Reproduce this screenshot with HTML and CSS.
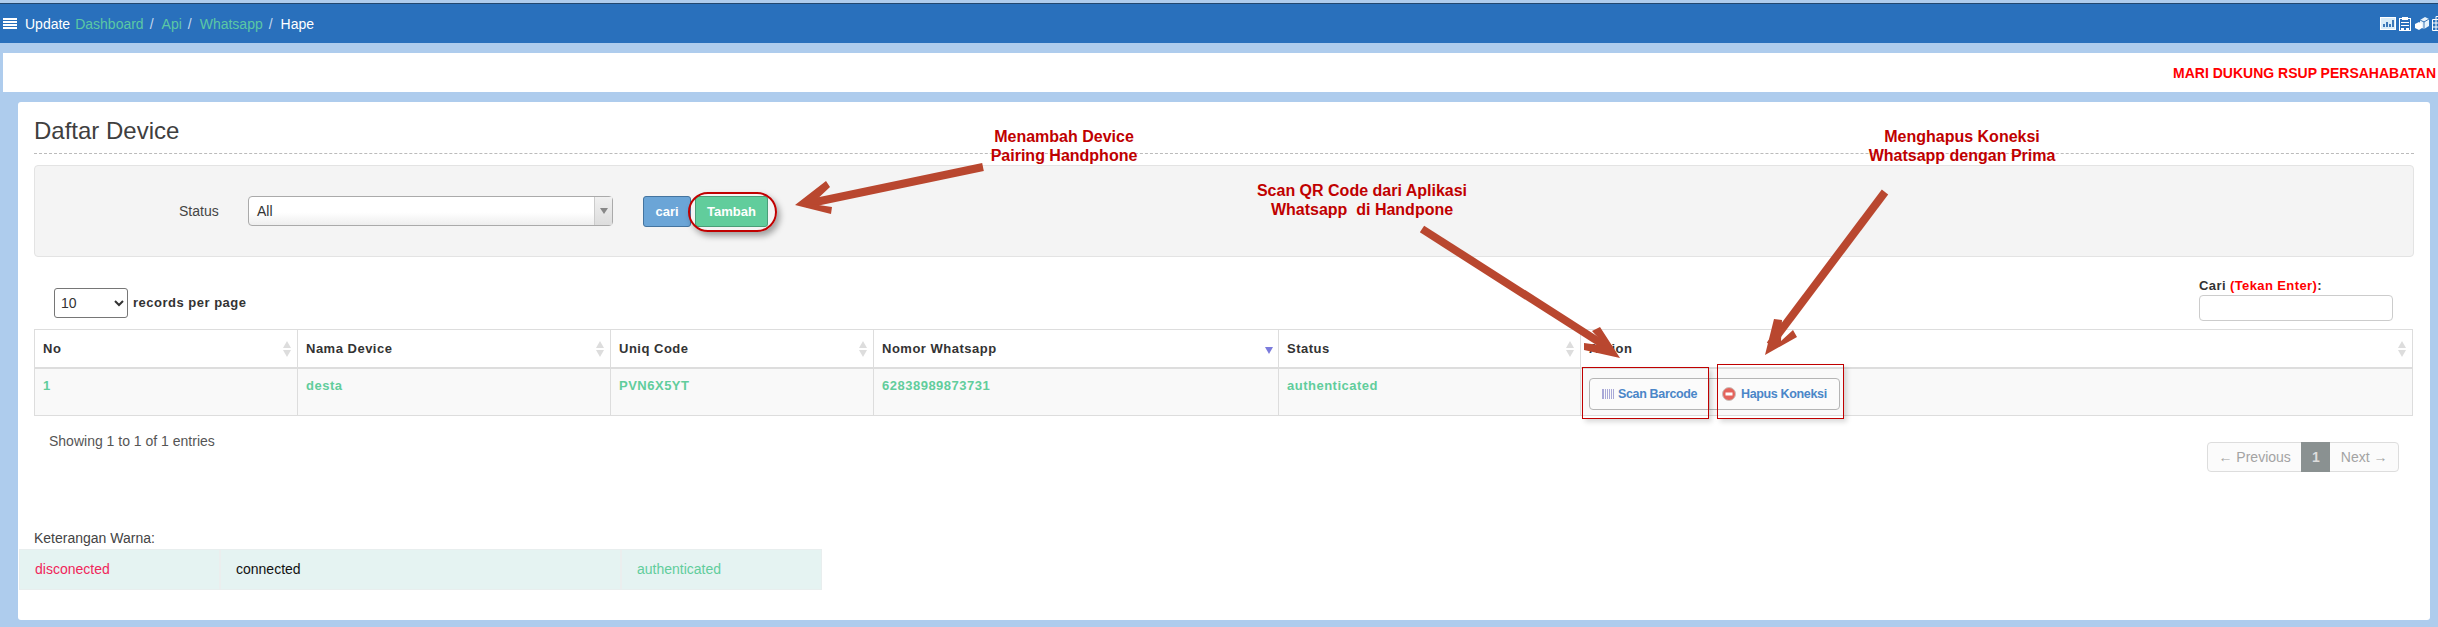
FILE: index.html
```html
<!DOCTYPE html>
<html lang="en">

<head>
    <meta charset="UTF-8">
    <meta name="viewport" content="width=device-width, initial-scale=1.0">
    <title>Daftar Device</title>
    <link rel="stylesheet" href="styles.css">
</head>

<body>
    <header class="topbar">
        <div class="crumbs">
            <span class="burger"><i></i><i></i><i></i><i></i></span>
            <span class="crumb-update">Update</span>
            <a href="#" class="crumb-link">Dashboard</a><span class="crumb-sep">/</span>
            <a href="#" class="crumb-link crumb-api">Api</a><span class="crumb-sep">/</span>
            <a href="#" class="crumb-link crumb-wa">Whatsapp</a><span class="crumb-sep">/</span>
            <span class="crumb-current">Hape</span>
        </div>
        <div class="tools">
            <svg width="16" height="13" viewBox="0 0 16 13">
                <rect x="0.5" y="0.5" width="15" height="12" fill="#d9ecf8" stroke="#fff" />
                <path d="M3 10V7h2v3zM6 10V5h2v5zM9 10V7h2v3zM12 10V3h2v7z" fill="#3c78b8" />
            </svg>
            <svg width="12" height="14" viewBox="0 0 12 14">
                <rect x="0.5" y="1.5" width="11" height="12" fill="#2970bc" stroke="#fff" />
                <rect x="3" y="0" width="6" height="3" fill="#fff" />
                <path d="M2 5h8v1H2zM2 8h8v1H2zM2 11h3v2H2zM7 11h3v2H7z" fill="#fff" />
            </svg>
            <svg width="15" height="13" viewBox="0 0 15 13">
                <path d="M6 3l5-3 4 2v7l-5 3-4-2z" fill="#e6f2fb" />
                <path d="M1 7l4-2 3 2v4l-3 2-4-2z" fill="#fff" />
                <path d="M10 4v8M6 3l4 2 5-3" stroke="#3c78b8" fill="none" />
            </svg>
            <svg width="12" height="15" viewBox="0 0 12 15">
                <path d="M0.5 3.5h11v11H0.5zM4 3.5v11M8 3.5v11M0.5 7h11M0.5 11h11M4 3.5V0.5h4v3" fill="none" stroke="#fff" />
            </svg>
        </div>
    </header>

    <div class="notice">
        <span>MARI DUKUNG RSUP PERSAHABATAN</span>
    </div>

    <main class="panel">
        <h1 class="page-title">Daftar Device</h1>

        <div class="filter-well">
            <label class="filter-label">Status</label>
            <div class="fake-select">
                <span class="fake-select-text">All</span>
                <span class="fake-select-arrow"></span>
            </div>
            <div class="filter-buttons">
                <button class="btn btn-cari" type="button">cari</button>
                <button class="btn btn-tambah" type="button">Tambah</button>
            </div>
        </div>

        <div class="table-top">
            <div class="page-size">
                <select class="page-size-select">
                    <option>10</option>
                </select>
                <span>records per page</span>
            </div>
            <div class="search-box">
                <label for="cari">Cari <span class="search-hint">(Tekan Enter)</span>:</label>
                <input type="text" id="cari">
            </div>
        </div>

        <table class="device-table">
            <thead>
                <tr>
                    <th class="col-no">No<span class="sort"></span></th>
                    <th class="col-name">Nama Device<span class="sort"></span></th>
                    <th class="col-code">Uniq Code<span class="sort"></span></th>
                    <th class="col-wa">Nomor Whatsapp<span class="sort-active"></span></th>
                    <th class="col-status">Status<span class="sort"></span></th>
                    <th>Action<span class="sort"></span></th>
                </tr>
            </thead>
            <tbody>
                <tr>
                    <td>1</td>
                    <td>desta</td>
                    <td>PVN6X5YT</td>
                    <td>62838989873731</td>
                    <td>authenticated</td>
                    <td class="action-cell">
                        <div class="btn-group">
                            <a href="#" class="act act-scan">
                                <svg width="12" height="10" viewBox="0 0 12 10">
                                    <path d="M0 0h2v10H0zM3 0h1v10H3zM5 0h1v10H5zM7 0h1v10H7zM9 0h1v10H9zM11 0h1v10h-1z" fill="#a9a9d8" />
                                </svg>
                                Scan Barcode
                            </a>
                            <a href="#" class="act act-hapus">
                                <svg width="14" height="14" viewBox="0 0 14 14">
                                    <circle cx="7" cy="7" r="6.5" fill="#e4645c" stroke="#c9c0bc" />
                                    <rect x="3.5" y="5.5" width="7" height="3" fill="#fff" />
                                </svg>
                                Hapus Koneksi
                            </a>
                        </div>
                    </td>
                </tr>
            </tbody>
        </table>

        <div class="table-bottom">
            <div class="entries">Showing 1 to 1 of 1 entries</div>
            <div class="pager">
                <span class="pager-item">&larr; Previous</span>
                <span class="pager-item pager-active">1</span>
                <span class="pager-item">Next &rarr;</span>
            </div>
        </div>

        <div class="legend-title">Keterangan Warna:</div>
        <div class="legend">
            <div class="legend-cell legend-red">disconected</div>
            <div class="legend-cell legend-black">connected</div>
            <div class="legend-cell legend-green">authenticated</div>
        </div>
    </main>

    <!-- annotations drawn on top of the screenshot -->
    <div class="note note-add">Menambah Device<br>Pairing Handphone</div>
    <div class="note note-scan">Scan QR Code dari Aplikasi<br>Whatsapp&nbsp; di Handpone</div>
    <div class="note note-remove">Menghapus Koneksi<br>Whatsapp dengan Prima</div>

    <div class="mark-oval"></div>
    <div class="mark-box mark-box-scan"></div>
    <div class="mark-box mark-box-hapus"></div>

    <svg class="arrows" width="2438" height="627" viewBox="0 0 2438 627">
        <g fill="none" stroke="#b9472f" stroke-width="8">
            <path d="M983 167L806 204" />
            <path d="M1422 229L1610 349" />
            <path d="M1885 192L1770 345" />
        </g>
        <g fill="#b9472f">
            <path d="M795 205L826 181L830 187L812 204L832 207L831 214z" />
            <path d="M1620 358L1600 327L1592 331L1606 346L1584 343L1584 350z" />
            <path d="M1765 355L1774 319L1782 320L1781 341L1793 330L1797 337z" />
        </g>
    </svg>
</body>

</html>
```

FILE: styles.css
```css
* {
    box-sizing: border-box;
}

html,
body {
    height: 100%;
}

body {
    font-family: "Liberation Sans", Arial, sans-serif;
    font-size: 14px;
    color: #333333;
    margin: 0;
    padding-top: 3px;
    background-color: #aecced;
    overflow: hidden;
    position: relative;
}

a {
    text-decoration: none;
}

.topbar {
    height: 40px;
    background-color: #2970bc;
    border-top: 1px solid #22476f;
    display: flex;
    justify-content: space-between;
    align-items: center;
    overflow: hidden;
}

.crumbs {
    display: flex;
    align-items: center;
    padding-left: 3px;
    color: #ffffff;
}

.burger {
    display: flex;
    flex-direction: column;
    gap: 1px;
    width: 14px;
    margin-right: 8px;
}

.burger i {
    display: block;
    height: 2px;
    background-color: #ffffff;
}

.crumb-update {
    margin-right: 5px;
}

.crumb-link {
    color: #5bc8a4;
}

.crumb-sep {
    color: #c5d8ee;
    margin-left: 6px;
    margin-right: 8px;
}

.crumb-current {
    color: #ffffff;
}

.tools {
    display: flex;
    align-items: center;
    gap: 3px;
    width: 58px;
    flex-shrink: 0;
    flex-wrap: nowrap;
}

.tools svg {
    flex-shrink: 0;
}

.notice {
    height: 39px;
    margin: 10px 0 10px 3px;
    background-color: #ffffff;
    color: #ff0000;
    font-weight: bold;
    font-size: 14px;
    display: flex;
    align-items: center;
    justify-content: flex-end;
    padding-right: 2px;
    white-space: nowrap;
}

.panel {
    height: 518px;
    margin: 0 8px 0 18px;
    padding: 0 16px;
    background-color: #ffffff;
    border-radius: 3px;
}

.page-title {
    height: 52px;
    margin: 0;
    padding-top: 15px;
    font-size: 24px;
    line-height: 28px;
    font-weight: normal;
    color: #3f3f3f;
    border-bottom: 1px dashed #bbbbbb;
}

.filter-well {
    height: 92px;
    margin-top: 11px;
    background-color: #f4f4f4;
    border: 1px solid #e3e3e3;
    border-radius: 4px;
    display: flex;
    align-items: flex-start;
    padding-top: 30px;
}

.filter-label {
    padding-left: 144px;
    box-sizing: content-box;
    width: 40px;
    line-height: 30px;
    color: #444444;
}

.fake-select {
    width: 365px;
    height: 30px;
    margin-left: 29px;
    border: 1px solid #aaaaaa;
    border-radius: 4px;
    background: linear-gradient(#ffffff 55%, #eeeeee);
    display: flex;
    justify-content: space-between;
    align-items: center;
}

.fake-select-text {
    padding-left: 8px;
}

.fake-select-arrow {
    width: 18px;
    height: 28px;
    border-left: 1px solid #cccccc;
    background: linear-gradient(#f0f0f0, #dddddd);
    position: relative;
}

.fake-select-arrow::after {
    content: "";
    position: absolute;
    left: 5px;
    top: 11px;
    border-left: 4px solid transparent;
    border-right: 4px solid transparent;
    border-top: 6px solid #888888;
}

.filter-buttons {
    display: flex;
    gap: 4px;
    margin-left: 30px;
}

.btn {
    height: 31px;
    border-radius: 3px;
    color: #ffffff;
    font-family: inherit;
    font-weight: bold;
    font-size: 13px;
    padding: 0;
}

.btn-cari {
    width: 48px;
    background-color: #6ba5d7;
    border: 1px solid #44749f;
}

.btn-tambah {
    width: 73px;
    background-color: #61cd9c;
    border: 1px solid #4a9e78;
}

.table-top {
    display: flex;
    justify-content: space-between;
    height: 72px;
    padding: 31px 21px 0 20px;
}

.page-size {
    display: flex;
    align-items: flex-start;
    gap: 5px;
    font-weight: bold;
    font-size: 13px;
    letter-spacing: 0.5px;
    line-height: 30px;
}

.page-size-select {
    width: 74px;
    height: 30px;
    padding-left: 2px;
    font-family: inherit;
    font-size: 14px;
    font-weight: normal;
    color: #333333;
    background-color: #ffffff;
    border: 1px solid #767676;
    border-radius: 3px;
}

.search-box {
    width: 194px;
    font-size: 13px;
    font-weight: bold;
    letter-spacing: 0.4px;
    line-height: 18px;
    margin-top: -11px;
}

.search-box label {
    display: block;
    height: 18px;
}

.search-hint {
    color: #ff0000;
}

.search-box input {
    display: block;
    width: 194px;
    height: 26px;
    border: 1px solid #cccccc;
    border-radius: 4px;
    background-color: #ffffff;
}

.device-table {
    width: 2379px;
    border-collapse: collapse;
    table-layout: fixed;
    font-size: 13px;
    letter-spacing: 0.5px;
    font-weight: bold;
}

.device-table th,
.device-table td {
    border: 1px solid #dddddd;
    padding: 0 8px;
    text-align: left;
    position: relative;
}

.device-table th {
    height: 38px;
    border-bottom: 2px solid #dddddd;
    color: #333333;
}

.device-table td {
    height: 48px;
    padding-top: 9px;
    vertical-align: top;
    background-color: #f9f9f9;
    color: #61cd9c;
}

.col-no {
    width: 263px;
}

.col-name {
    width: 313px;
}

.col-code {
    width: 263px;
}

.col-wa {
    width: 405px;
}

.col-status {
    width: 302px;
}

.sort {
    position: absolute;
    right: 6px;
    top: 11px;
    width: 8px;
    height: 16px;
}

.sort::before,
.sort::after {
    content: "";
    position: absolute;
    left: 0;
    border-left: 4px solid transparent;
    border-right: 4px solid transparent;
}

.sort::before {
    top: 0;
    border-bottom: 7px solid #dddddd;
}

.sort::after {
    bottom: 0;
    border-top: 7px solid #dddddd;
}

.sort-active {
    position: absolute;
    right: 5px;
    top: 17px;
    border-left: 4px solid transparent;
    border-right: 4px solid transparent;
    border-top: 7px solid #7b7bdc;
}

.device-table .action-cell {
    padding: 9px 0 0 8px;
}

.btn-group {
    display: flex;
    width: 251px;
    height: 32px;
    border: 1px solid #b5b5b5;
    border-radius: 4px;
    background-color: #fbfbfb;
}

.act {
    display: flex;
    align-items: center;
    gap: 4px;
    font-size: 12.5px;
    letter-spacing: -0.35px;
    color: #4a86c8;
}

.act-scan {
    width: 120px;
    padding-left: 12px;
    border-right: 1px solid #dddddd;
}

.act-hapus {
    padding-left: 12px;
    gap: 5px;
}

.table-bottom {
    display: flex;
    justify-content: space-between;
    padding: 16px 15px 0 15px;
}

.entries {
    color: #555555;
    line-height: 18px;
}

.pager {
    display: flex;
    height: 30px;
    margin-top: 10px;
    border: 1px solid #dddddd;
    border-radius: 4px;
    background-color: #fbfbfb;
    color: #a3a3a3;
}

.pager-item {
    padding: 0 10.5px;
    line-height: 28px;
}

.pager-active {
    width: 29px;
    padding: 0;
    margin-top: -1px;
    height: 30px;
    line-height: 30px;
    text-align: center;
    background-color: #8a9191;
    color: #dddddd;
    font-weight: bold;
}

.legend-title {
    margin-top: 57px;
    line-height: 18px;
    color: #444444;
}

.legend {
    display: grid;
    grid-template-columns: 201px 401px 201px;
    width: 803px;
    height: 41px;
    margin: 2px 0 0 -15px;
    background-color: #e5f3f2;
    border: 1px solid #e8eeee;
}

.legend-cell {
    padding-left: 15px;
    line-height: 39px;
    border-right: 2px solid #ebeeee;
}

.legend-cell:last-child {
    border-right: none;
}

.legend-red {
    color: #f0265a;
}

.legend-black {
    color: #111111;
}

.legend-green {
    color: #61cd9c;
}

.note {
    position: absolute;
    color: #c00000;
    font-weight: bold;
    font-size: 16px;
    line-height: 19px;
    text-align: center;
    white-space: nowrap;
    transform: translateX(-50%);
}

.note-add {
    left: 1064px;
    top: 127px;
}

.note-scan {
    left: 1362px;
    top: 181px;
}

.note-remove {
    left: 1962px;
    top: 127px;
}

.mark-oval {
    position: absolute;
    left: 688px;
    top: 192px;
    width: 89px;
    height: 40px;
    border: 2px solid #c00000;
    border-radius: 20px;
    box-shadow: 3px 4px 6px rgba(0, 0, 0, 0.35);
}

.mark-box {
    position: absolute;
    top: 367px;
    height: 52px;
    border: 1px solid #c00000;
    box-shadow: 3px 3px 5px rgba(0, 0, 0, 0.15);
}

.mark-box-scan {
    left: 1582px;
    width: 127px;
}

.mark-box-hapus {
    left: 1717px;
    top: 364px;
    height: 55px;
    width: 127px;
}

.arrows {
    position: absolute;
    left: 0;
    top: 0;
    pointer-events: none;
}
```
